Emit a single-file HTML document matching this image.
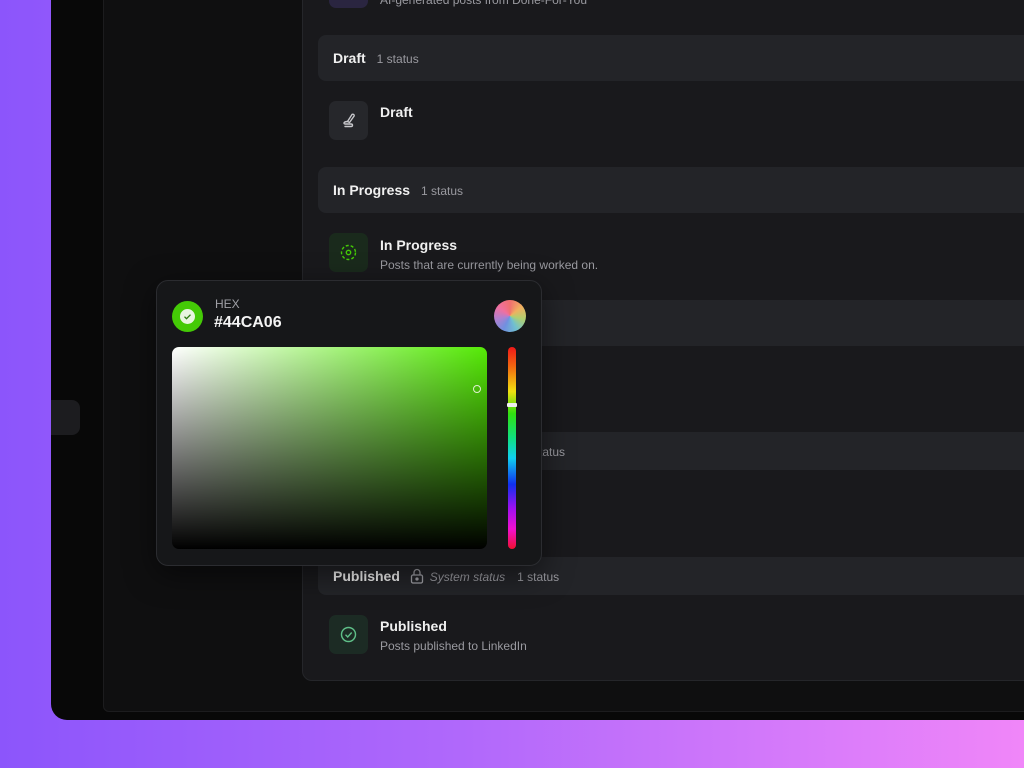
<!DOCTYPE html>
<html><head><meta charset="utf-8"><style>
*{margin:0;padding:0;box-sizing:border-box}
body{width:1024px;height:768px;overflow:hidden;position:relative;font-family:"Liberation Sans",sans-serif;background:linear-gradient(90deg,#8c55fb 0%,#b068fb 45%,#f086f9 100%)}
.abs{position:absolute}
.win{left:51px;top:-20px;width:1000px;height:740px;background:#080808;border-radius:0 0 0 16px}
.inner{left:103px;top:-20px;width:940px;height:732px;background:#0f0f10;border:1px solid #1c1c1e;border-radius:0 0 0 6px}
.main{left:302px;top:-20px;width:740px;height:701px;background:#19191c;border:1px solid #25262a;border-radius:0 0 0 10px}
.hdr{left:318px;width:720px;height:46px;background:#232428;border-radius:8px}
.ht{position:absolute;left:15px;top:50%;transform:translateY(-50%);color:#f0f0f0;font-size:14px;font-weight:bold;white-space:nowrap}
.ht span{color:#9a9aa0;font-weight:normal;font-size:12px;margin-left:11px}
.ic{left:329px;width:39px;height:39px;border-radius:7px;background:#26272b}
.t1{left:380px;color:#f0f0f0;font-size:14px;font-weight:bold}
.t2{left:380px;color:#9a9aa0;font-size:12px}
.pick{left:156px;top:280px;width:386px;height:286px;background:#161719;border:1px solid #2b2c30;border-radius:12px;box-shadow:0 8px 30px rgba(0,0,0,.5)}
</style></head><body>
<div class="abs win"></div>
<div class="abs inner"></div>
<div class="abs" style="left:51px;top:400px;width:29px;height:35px;background:#1c1c1f;border-radius:0 8px 8px 0"></div>
<div class="abs main"></div>

<div class="abs" style="left:329px;top:-31px;width:39px;height:39px;border-radius:7px;background:#2a2540"></div>
<div class="abs t2" style="top:-7px">AI-generated posts from Done-For-You</div>

<div class="abs hdr" style="top:35px"><div class="ht">Draft<span>1 status</span></div></div>
<div class="abs ic" style="top:101px"><svg width="39" height="39" viewBox="0 0 39 39" fill="none" stroke="#c8c8cc" stroke-width="1.4" stroke-linecap="round"><path d="M18.5 20.5 L23 13.5 a1.4 1.4 0 0 1 2.2 1.4 L20.5 21.5 Z"/><path d="M18.5 20.5 C15 20.5 14 22.5 16 23 L22 23 C24 23 24 25.5 22 25.5 L16 25.5"/></svg></div>
<div class="abs t1" style="top:104px">Draft</div>

<div class="abs hdr" style="top:167px"><div class="ht">In Progress<span>1 status</span></div></div>
<div class="abs ic" style="top:233px;background:#1a2a1c"><svg width="39" height="39" viewBox="0 0 39 39" fill="none" stroke="#44ca06" stroke-width="1.4"><circle cx="19.5" cy="19.5" r="7" stroke-dasharray="3 2"/><circle cx="19.5" cy="19.5" r="2.2"/></svg></div>
<div class="abs t1" style="top:237px">In Progress</div>
<div class="abs t2" style="top:258px">Posts that are currently being worked on.</div>

<div class="abs hdr" style="top:300px"></div>
<div class="abs hdr" style="top:432px;height:38px"><div class="ht" style="left:205px"><span style="margin:0">1 status</span></div></div>

<div class="abs hdr" style="top:557px;height:38px"><div class="ht">Published
<svg style="vertical-align:-3px;margin-left:6px" width="14" height="16" viewBox="0 0 14 16" fill="none" stroke="#a0a0a6" stroke-width="1.3"><rect x="1.5" y="7" width="11" height="8" rx="1.5"/><path d="M4 7V4.5a3 3 0 0 1 6 0V7"/><circle cx="7" cy="11" r="1" fill="#a0a0a6"/></svg><span style="font-style:italic;margin-left:6px">System status</span><span style="margin-left:12px">1 status</span></div></div>
<div class="abs ic" style="top:615px;background:#1c2b24"><svg width="39" height="39" viewBox="0 0 39 39" fill="none" stroke="#5fbf88" stroke-width="1.4"><circle cx="19.5" cy="19.5" r="7"/><path d="M16.5 19.7 l2.2 2.3 l4-4.5"/></svg></div>
<div class="abs t1" style="top:618px">Published</div>
<div class="abs t2" style="top:639px">Posts published to LinkedIn</div>

<div class="abs pick">
  <div class="abs" style="left:15px;top:20px;width:31px;height:31px;border-radius:50%;background:#44ca06"><div class="abs" style="left:8px;top:8px;width:15px;height:15px;border-radius:50%;background:#e8f5e0"><svg width="15" height="15" viewBox="0 0 15 15" fill="none" stroke="#2c7a10" stroke-width="1.3"><path d="M4.5 7.7 l2 2 l4-4"/></svg></div></div>
  <div class="abs" style="left:58px;top:16px;color:#a0a0a6;font-size:12px">HEX</div>
  <div class="abs" style="left:57px;top:33px;color:#f4f4f4;font-size:16px;font-weight:bold">#44CA06</div>
  <div class="abs" style="left:337px;top:19px;width:32px;height:32px;border-radius:50%;background:conic-gradient(#f07070,#f0b060,#b0d070,#70c0d0,#7090e0,#b080d0,#f070a0,#f07070)"></div>
  <div class="abs" style="left:15px;top:66px;width:315px;height:202px;border-radius:7px;background:linear-gradient(to bottom,rgba(0,0,0,0),#000),linear-gradient(to right,#fff,#55ea06)"></div>
  <div class="abs" style="left:316px;top:104px;width:8px;height:8px;border-radius:50%;border:1.6px solid #e0f0d0"></div>
  <div class="abs" style="left:351px;top:66px;width:8px;height:202px;border-radius:4px;background:linear-gradient(#f01818,#f06a10 10%,#f0e010 22%,#30e010 33%,#10e080 45%,#10d0f0 55%,#1030f0 68%,#a010f0 80%,#f010d0 90%,#f01030)"></div>
  <div class="abs" style="left:350px;top:122px;width:10px;height:4px;background:#f0f0f0;border-radius:1px"></div>
</div>
</body></html>
